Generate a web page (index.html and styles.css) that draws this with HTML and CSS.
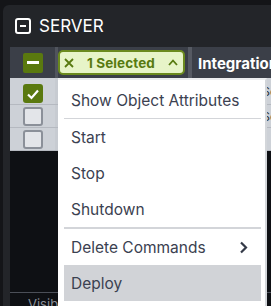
FILE: index.html
```html
<!DOCTYPE html>
<html lang="en">

<head>
    <meta charset="UTF-8">
    <meta name="viewport" content="width=device-width, initial-scale=1.0">
    <title>Server</title>
    <link rel="stylesheet" href="styles.css">
</head>

<body>
    <div class="panel">
        <div class="panel-title">
            <svg class="collapse-icon" width="16" height="16" viewBox="0 0 16 16">
                <rect x="1" y="1" width="14" height="14" rx="2" fill="none" stroke="#fff" stroke-width="2" />
                <line x1="5" y1="8" x2="11" y2="8" stroke="#fff" stroke-width="2" />
            </svg>
            <span>SERVER</span>
        </div>

        <div class="grid">
            <div class="grid-head">
                <div class="cell-check head-check">
                    <span class="box box-on"><span class="dash"></span></span>
                </div>
                <div class="cell-select">
                    <div class="chip">
                        <svg width="10" height="10" viewBox="0 0 10 10">
                            <path d="M1 1 L9 9 M9 1 L1 9" stroke="#587a10" stroke-width="1.8" fill="none" />
                        </svg>
                        <span class="chip-label">1 Selected</span>
                        <svg width="10" height="7" viewBox="0 0 10 7">
                            <path d="M1 6 L5 1.5 L9 6" stroke="#587a10" stroke-width="1.8" fill="none" />
                        </svg>
                    </div>
                </div>
                <div class="cell-name">Integration</div>
            </div>

            <div class="row row-first">
                <div class="cell-check">
                    <span class="box box-on">
                        <svg width="14" height="12" viewBox="0 0 14 12">
                            <path d="M2 6.5 L5.5 10 L12 2.5" stroke="#fff" stroke-width="2.2" fill="none" />
                        </svg>
                    </span>
                </div>
                <div class="cell-text">
                    <span class="frag">Integration Server Primary Node -</span>
                </div>
            </div>
            <div class="row">
                <div class="cell-check"><span class="box"></span></div>
                <div class="cell-text">
                    <span class="frag">Integration Server Backup Node -</span>
                </div>
            </div>
            <div class="row">
                <div class="cell-check"><span class="box"></span></div>
                <div class="cell-text"></div>
            </div>

            <div class="grid-empty"></div>
            <div class="grid-foot">Visible 3 of 3</div>

            <!-- context menu over the grid -->
            <div class="menu">
                <div class="menu-item">Show Object Attributes</div>
                <div class="menu-sep"></div>
                <div class="menu-item">Start</div>
                <div class="menu-item">Stop</div>
                <div class="menu-item">Shutdown</div>
                <div class="menu-sep menu-sep-thick"></div>
                <div class="menu-item">
                    Delete Commands
                    <svg class="menu-arrow" width="9" height="13" viewBox="0 0 9 13">
                        <path d="M2 1.5 L7 6.5 L2 11.5" stroke="#343a48" stroke-width="2.2" fill="none" />
                    </svg>
                </div>
                <div class="menu-item menu-item-hover">Deploy</div>
            </div>
        </div>
    </div>
</body>

</html>
```

FILE: styles.css
```css
body {
    margin: 0;
    height: 306px;
    overflow: hidden;
    background-color: #141518;
    font-family: Inter, 'Noto Sans', sans-serif;
    color: white;
}

.panel {
    margin: 5px 0 0 3px;
    height: 301px;
    padding: 12px 0 0 7px;
    box-sizing: border-box;
    background-color: #232529;
    border-top-left-radius: 6px;
}

.panel-title {
    display: flex;
    align-items: center;
    gap: 8px;
    height: 18px;
    padding-left: 5px;
    margin-bottom: 12px;
    font-size: 17px;
}

.grid {
    position: relative;
}

.grid-head {
    display: flex;
    height: 31px;
    background-color: #3b3f48;
}

.cell-check {
    width: 45px;
    flex: none;
    display: flex;
    justify-content: center;
    border-right: 3px solid #c7cbd1;
}

.head-check {
    align-items: center;
    border-right-color: #50545d;
}

.cell-select {
    width: 130px;
    flex: none;
    display: flex;
    align-items: center;
    border-right: 4px solid #565a63;
}

.chip {
    width: 127px;
    height: 25px;
    box-sizing: border-box;
    display: flex;
    align-items: center;
    padding: 0 5px 0 4px;
    background-color: #e7f4c8;
    border: 2px solid #6b8a1e;
    border-radius: 5px;
    color: #587a10;
    font-size: 13.5px;
    font-weight: 700;
}

.chip-label {
    margin-left: 13px;
    margin-right: auto;
    letter-spacing: 0.1px;
}

.cell-name {
    padding: 7px 0 0 6px;
    font-size: 15px;
    font-weight: 700;
    white-space: nowrap;
}

.row {
    display: flex;
    height: 22px;
    background-color: #cdd1d7;
    border-bottom: 1px solid #b5b9c0;
}

.row-first {
    height: 26px;
}

.row .cell-check {
    align-items: flex-end;
    padding-bottom: 1px;
}

.cell-text {
    flex: 1;
    display: flex;
    align-items: center;
    padding-left: 140px;
    font-size: 12px;
    color: #2b2f38;
    white-space: nowrap;
    overflow: hidden;
}

.box {
    width: 20px;
    height: 19px;
    box-sizing: border-box;
    display: flex;
    align-items: center;
    justify-content: center;
    background-color: #e3e5e9;
    border: 2px solid #8b9099;
    border-radius: 3px;
}

.box-on {
    background-color: #5a790f;
    border-color: #5a790f;
}

.head-check .box {
    height: 20px;
    border-radius: 2px;
}

.dash {
    width: 12px;
    height: 3px;
    background-color: white;
}

.grid-empty {
    height: 141px;
    background-color: #0e1014;
}

.grid-foot {
    height: 20px;
    padding: 3px 0 0 18px;
    background-color: #0e1014;
    border-top: 1px solid #4b4f58;
    font-size: 13px;
    color: #8a8f98;
}

.menu {
    position: absolute;
    top: 31px;
    left: 48px;
    width: 197px;
    height: 240px;
    padding: 2px 4px 0 6px;
    background-color: white;
    border-top: 2px solid #eceef0;
    border-right: 2px solid #d3d6da;
    color: #3b4150;
    font-size: 15.5px;
}

.menu-item {
    display: flex;
    align-items: center;
    height: 36px;
    padding: 0 13px 0 7px;
}

.menu-item-hover {
    background-color: #d1d3d7;
}

.menu-arrow {
    margin-left: auto;
}

.menu-sep {
    height: 1px;
    background-color: #d3d5d9;
}

.menu-sep-thick {
    height: 2px;
}
```
